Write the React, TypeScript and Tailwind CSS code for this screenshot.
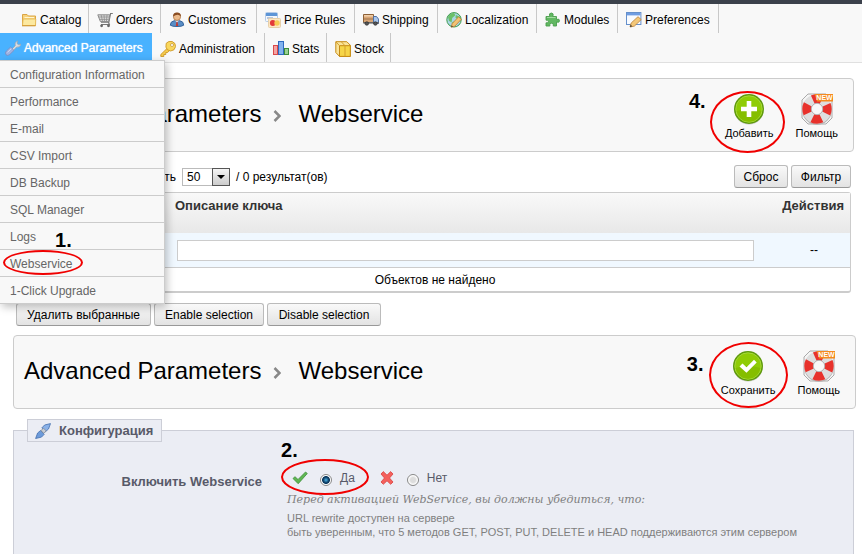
import React, { useState } from "react";

type IconProps = { children: React.ReactNode };

function Icon16({ children }: IconProps) {
  return (
    <svg className="h-4 w-4 shrink-0" viewBox="0 0 16 16" aria-hidden="true">
      {children}
    </svg>
  );
}

const FolderIcon = () => (
  <Icon16>
    <path d="M1.5 13.500V2.500h4.500l1.500 1.500h7v9.500z" fill="#f7d27c" stroke="#dba544" />
    <path d="M1.500 13.500l.7-6.500h12.600l-.3 6.500z" fill="#fce9a0" stroke="#e5b650" strokeWidth=".8" />
    <path d="M3.500 5.500h9.500" stroke="#fff6cf" />
    <path d="M1 13.800h13.500" stroke="#cf9833" />
  </Icon16>
);
const CartIcon = () => (
  <Icon16>
    <path d="M15.800 1.500h-2.200l-1.800 8.600H4M11.500 10.300l.8 2.200H4" fill="none" stroke="#777" strokeWidth="1.200" />
    <path d="M12.800 2.800H.8l2.600 6.800h8.200z" fill="#dcdcdc" stroke="#8a8a8a" />
    <path d="M1.500 5h10.500M2.500 7.400h9M4.200 3l1.300 6.500M7 3l.5 6.500M10 3l-.6 6.500" stroke="#8d8d8d" strokeWidth=".8" />
    <circle cx="4.600" cy="13.800" r="1.400" fill="#666" />
    <circle cx="11.500" cy="13.800" r="1.400" fill="#666" />
  </Icon16>
);
const CustomerIcon = () => (
  <Icon16>
    <path d="M1.3 13.2q0-3.900 4-4.500h5.400q4 .6 4 4.500-1.700 1.300-6.700 1.300t-6.700-1.300z" fill="#5a8ec6" stroke="#34639b" />
    <path d="M6 8.5l2 2 2-2z" fill="#fff" />
    <path d="M7.4 9.8h1.2l.6 4.200H6.800z" fill="#c03a32" />
    <circle cx="8" cy="4.800" r="3.600" fill="#eab98a" stroke="#a86b3a" strokeWidth=".7" />
    <path d="M4 4.600Q4 .5 8 .5t4 4.100q-1.400-1.800-3.400-1.800T4 4.600z" fill="#8a4d22" />
  </Icon16>
);
const PriceIcon = () => (
  <Icon16>
    <rect x=".5" y=".5" width="12" height="9" rx="1" fill="#f3f7fc" stroke="#b5cbe8" />
    <path d="M1 1h11.200v3H1z" fill="#5d95d6" />
    <path d="M2 6h6" stroke="#7c92b8" />
    <rect x="3.500" y="6.500" width="12" height="9" rx="1" fill="#fde7c2" stroke="#e6cfa8" />
    <circle cx="7.800" cy="11" r="2.900" fill="#e33a3a" />
    <circle cx="12" cy="11" r="2.700" fill="#f8cc55" />
  </Icon16>
);
const TruckIcon = () => (
  <Icon16>
    <path d="M.500 2.500h10v8H.500z" fill="#d9a676" stroke="#8d6137" />
    <path d="M1 3h9v1.600H1z" fill="#f0cfaa" />
    <path d="M1 7h9" stroke="#9f7750" />
    <path d="M10.500 4.500h3l2 2.600v4.400h-5z" fill="#a9c6ec" stroke="#4d70a5" />
    <path d="M.3 10h15.400v1.600H.3z" fill="#686868" />
    <circle cx="3.800" cy="11.500" r="1.800" fill="#555" stroke="#222" strokeWidth=".6" />
    <circle cx="12.400" cy="11.500" r="1.800" fill="#555" stroke="#222" strokeWidth=".6" />
  </Icon16>
);
const GlobeIcon = () => (
  <Icon16>
    <circle cx="8" cy="7.800" r="7.200" fill="#a9d6e6" stroke="#3d9a4a" />
    <path d="M2 5q2-4 6-4l1.400 2.300L6.200 6l-.6 4.200L3 9zM10 3l4 2 .6 3.600-3-1-2.200-2z" fill="#6cc068" />
    <path d="M5.500 11l2-1.600L9.600 11 8 14.400z" fill="#6cc068" />
    <path d="M5.200 15.200l1-3.600 6.400-6.800 2.700 2.500-6.500 6.900z" fill="#f2c274" stroke="#bb7e32" strokeWidth=".8" />
    <path d="M5.200 15.200l.5-1.800 1.300 1.200z" fill="#333" />
  </Icon16>
);
const PuzzleIcon = () => (
  <Icon16>
    <path
      d="M1 4.500h3.700Q3.500 1 6.300 1t1.600 3.500h3.600V7.500q3-1.200 3 1.200t-3 1.300v4H8.300q.9-2.800-1.800-2.800T4.900 14H1v-3.200q2.400.6 2.400-1.300T1 8.200z"
      fill="#62b862"
      stroke="#4a9e4c"
      strokeWidth=".9"
    />
    <path d="M2 5.500h8.600" stroke="#a3dba0" />
  </Icon16>
);
const PreferencesIcon = () => (
  <Icon16>
    <rect x=".500" y=".500" width="14.400" height="12" fill="#f8fbff" stroke="#6690cb" />
    <path d="M1 1h13.400v2.400H1z" fill="#6f9de2" />
    <path d="M4 15l1.200-4 6.800-6.300 3.200 2.900-6.800 6.500z" fill="#f3c778" stroke="#ba7d33" strokeWidth=".8" />
    <path d="M4 15l.7-2.200 1.600 1.500z" fill="#333" />
  </Icon16>
);
const ToolsIcon = () => (
  <Icon16>
    <path d="M6.500 9.500l3.800-3.800Q9 2.600 12.600.8L12 3.500l1.400 1.200L16 4q-1.200 4-4.400 3L8 10.800z" fill="#d9dde3" stroke="#9aa2ae" strokeWidth=".7" />
    <path d="M1 14.800Q-.5 13 1.400 11l4.200-4L9 10.400l-4.200 4Q2.600 16.300 1 14.800z" fill="#9fb2e2" stroke="#7489bf" strokeWidth=".7" />
    <path d="M2.500 12.300l3.800-3.600" stroke="#cbd8f5" />
  </Icon16>
);
const KeyIcon = () => (
  <Icon16>
    <path d="M8 6.500L.8 13.500v2h3v-2h2v-2h1.800l2.600-2.600z" fill="#f5cb4b" stroke="#c88f1c" strokeWidth=".8" />
    <path d="M6.200 2.300Q8.400-.3 12.200.5q3.600 1.400 3.400 5.100-.8 4.200-5 4.400-3.700-.4-4.700-3.900z" fill="#f9d75d" stroke="#c88f1c" strokeWidth=".8" />
    <circle cx="12" cy="4" r="1.500" fill="#fff" stroke="#b98219" strokeWidth=".6" />
  </Icon16>
);
const StatsIcon = () => (
  <Icon16>
    <rect x=".500" y="4.500" width="4" height="9" fill="#f5a3a3" stroke="#d94a4a" />
    <rect x="5.500" y=".500" width="5" height="13" fill="#83b2ee" stroke="#2f6ac0" />
    <rect x="11.500" y="7.500" width="4" height="6" fill="#9bd193" stroke="#3c8b38" />
  </Icon16>
);
const BoxIcon = () => (
  <Icon16>
    <path d="M.8.700h11l3.500 3.500v11.200H4.500L.8 11.500z" fill="#fae49a" stroke="#c58a14" />
    <path d="M4.500 4.700h10.800v10.700H4.500z" fill="#f6d548" stroke="#c58a14" />
    <path d="M1 1l3.500 3.700M6.500 1L10 4.700v10.500" fill="none" stroke="#d5a02a" />
  </Icon16>
);
const PlugIcon = () => (
  <Icon16>
    <path d="M.6 15.500l2-5.500 3-2.500 3.600 3.800-2.700 2.800z" fill="#6d9bda" stroke="#426eaf" strokeWidth=".8" />
    <path d="M15.500.6l-2 5.400-3 2.700L6.800 5l2.800-3z" fill="#8bb2e8" stroke="#426eaf" strokeWidth=".8" />
    <path d="M6 7.500l2.500-2.300 2.700 2.700-2.500 2.400z" fill="#c7ccd3" stroke="#7a828f" strokeWidth=".7" />
  </Icon16>
);
const TickIcon = () => (
  <Icon16>
    <path d="M1 8.500L3 6.700 6 9.500 13.500 2l1.800 1.500L6.200 13.700z" fill="#5fb653" stroke="#3c8f38" strokeWidth=".8" />
  </Icon16>
);
const CrossIcon = () => (
  <Icon16>
    <path d="M2 4l2.300-2.400L8 5.200l3.700-3.600L14 4l-3.500 4 3.500 4-2.300 2.300L8 10.800l-3.700 3.500L2 12l3.500-4z" fill="#f4605c" stroke="#d8403e" strokeWidth=".8" />
  </Icon16>
);

function RoundIcon({ kind }: { kind: "plus" | "tick" }) {
  return (
    <svg className="h-8 w-8" viewBox="0 0 32 32" aria-hidden="true">
      <ellipse cx="16" cy="17.500" rx="14.500" ry="14" fill="#c9c9c9" />
      <circle cx="16" cy="16" r="15" fill="#5f9a0c" />
      <circle cx="16" cy="16" r="13.200" fill="#8fcc05" stroke="#a6d83a" />
      <path d="M3.500 18Q16 14 28.500 18 25.500 28.800 16 28.800T3.500 18z" fill="#85be00" />
      {kind === "plus" ? (
        <path d="M13.700 8h4.600v5.700H24v4.600h-5.700V24h-4.600v-5.700H8v-4.600h5.700z" fill="#fff" />
      ) : (
        <path d="M7.500 16.500l3-3 4 3.800 7.500-7.500 2.700 2.800L14.500 22.700z" fill="#fff" />
      )}
    </svg>
  );
}

function HelpIcon() {
  return (
    <svg className="h-8 w-8" viewBox="0 0 32 32" aria-hidden="true">
      <path d="M7 1h18l6 6v18l-6 6H7l-6-6V7z" fill="#f5f5f5" stroke="#aaa" />
      <circle cx="16" cy="17" r="14.800" fill="#b0b0b0" />
      <circle cx="16" cy="16" r="10.200" fill="none" stroke="#dedede" strokeWidth="9" />
      <circle
        cx="16"
        cy="16"
        r="10.200"
        fill="none"
        stroke="#e8322c"
        strokeWidth="9"
        strokeDasharray="9.220 6.800"
        strokeDashoffset="4.610"
      />
      <circle cx="16" cy="16" r="5.700" fill="#f8f8f8" stroke="#aaa" strokeWidth=".8" />
      <path d="M13.500 1H32v7.500H16z" fill="#f58a1f" />
      <text x="23.500" y="7.300" textAnchor="middle" fontSize="7" fontWeight="700" fill="#fff" fontFamily="Liberation Sans, sans-serif">
        NEW
      </text>
    </svg>
  );
}

/* Hand-drawn style red outline laid over a highlighted control */
function Ring({ className }: { className: string }) {
  return <span aria-hidden="true" className={`pointer-events-none absolute rounded-[50%] border-2 border-[#f00000] ${className}`} />;
}

function Step({ n, className }: { n: number; className: string }) {
  return <span className={`pointer-events-none absolute text-xl leading-5 font-bold text-black ${className}`}>{n}.</span>;
}

const firstRow = [
  { label: "Catalog", icon: <FolderIcon />, width: "w-[76px]" },
  { label: "Orders", icon: <CartIcon />, width: "w-[72px]" },
  { label: "Customers", icon: <CustomerIcon />, width: "w-[96px]" },
  { label: "Price Rules", icon: <PriceIcon />, width: "w-[98px]" },
  { label: "Shipping", icon: <TruckIcon />, width: "w-[83px]" },
  { label: "Localization", icon: <GlobeIcon />, width: "w-[99px]" },
  { label: "Modules", icon: <PuzzleIcon />, width: "w-[81px]" },
  { label: "Preferences", icon: <PreferencesIcon />, width: "w-[101px]" },
];
const secondRow = [
  { label: "Administration", icon: <KeyIcon />, width: "w-[113px]" },
  { label: "Stats", icon: <StatsIcon />, width: "w-[62px]" },
  { label: "Stock", icon: <BoxIcon />, width: "w-[64px]" },
];
const submenu = [
  "Configuration Information",
  "Performance",
  "E-mail",
  "CSV Import",
  "DB Backup",
  "SQL Manager",
  "Logs",
  "Webservice",
  "1-Click Upgrade",
];

function NavItem({ label, icon, width }: { label: string; icon: React.ReactNode; width: string }) {
  return (
    <li className={`${width} border-r border-[#c8c8c8]`}>
      <a href="#" className="flex h-[29px] items-center gap-[3px] pt-0.5 pl-2 whitespace-nowrap text-black">
        {icon}
        {label}
      </a>
    </li>
  );
}

function Submenu() {
  return (
    <ul className="absolute top-[27px] left-0 z-20 w-[165px] border-t border-r border-[#ccc] bg-[#f8f8f8] shadow-[2px_3px_8px_rgba(0,0,0,0.25)]">
      {submenu.map((label) => (
        <li key={label} className="relative">
          <a href="#" className="flex h-[27px] items-center border-b border-[#ccc] pt-0.5 pl-2.5 text-[#666]">
            {label}
          </a>
          {label === "Webservice" && (
            <>
              <Ring className="top-0 left-[3px] h-[25px] w-20" />
              <Step n={1} className="-top-5 left-[55px]" />
            </>
          )}
        </li>
      ))}
    </ul>
  );
}

type HeadingProps = { kind: "plus" | "tick"; label: string; step: number; ring: string; stepPlace: string };

function Heading({ kind, label, step, ring, stepPlace }: HeadingProps) {
  return (
    <header className="flex h-[74px] items-center justify-between rounded border border-[#ccc] bg-[#f8f8f8] pr-[15px] pl-2.5">
      <h1 className="flex items-center pb-0.5 text-2xl leading-8 text-black">
        Advanced Parameters
        <svg className="mt-1 mr-[17px] ml-3 h-3 w-2" viewBox="0 0 8 12" aria-hidden="true">
          <path d="M1.500 1l5 5-5 5" fill="none" stroke="#888" strokeWidth="2.500" />
        </svg>
        Webservice
      </h1>
      <div className="flex gap-[22px] pt-1 text-[11px] leading-4 text-black">
        <button type="button" className="relative flex flex-col items-center">
          <RoundIcon kind={kind} />
          <span>{label}</span>
          <Ring className={ring} />
          <Step n={step} className={stepPlace} />
        </button>
        <button type="button" className="flex flex-col items-center">
          <HelpIcon />
          <span>Помощь</span>
        </button>
      </div>
    </header>
  );
}

function Button({ children, width }: { children: React.ReactNode; width: string }) {
  return (
    <button
      type="button"
      className={`${width} h-[23px] rounded-[3px] border border-[#bbb] border-b-[#999] bg-linear-to-b from-[#f9f9f9] to-[#e3e3e3] whitespace-nowrap text-black`}
    >
      {children}
    </button>
  );
}

const radioClass =
  "h-3 w-3 appearance-none rounded-full border border-[#888] bg-[radial-gradient(circle,#ddd_0%,#ddd_35%,#fff_65%)] checked:bg-[radial-gradient(circle,#4bb4e8_0%,#0d3c63_40%,#0d3c63_50%,#fff_62%)]";

export default function App() {
  const [enabled, setEnabled] = useState(true);
  return (
    <div className="flex min-h-screen flex-col overflow-x-hidden bg-white font-['Liberation_Sans',Arial,sans-serif] text-xs text-black">
      <div className="h-1 bg-[#3b414b]" />
      <nav className="border-b border-[#e0e0e0] bg-[#f8f8f8]">
        <ul className="flex pl-[13px]">
          {firstRow.map((item) => (
            <NavItem key={item.label} {...item} />
          ))}
        </ul>
        <ul className="flex">
          <li className="relative w-[152px]">
            <a
              href="#"
              className="flex h-[27px] items-center gap-[3px] bg-[#49b2ff] pt-0.5 pl-[5px] whitespace-nowrap text-white [text-shadow:0_0_1px_#fff]"
            >
              <ToolsIcon />
              Advanced Parameters
            </a>
            <Submenu />
          </li>
          {secondRow.map((item) => (
            <NavItem key={item.label} {...item} />
          ))}
        </ul>
      </nav>

      <main className="flex flex-1 flex-col pt-[15px] pl-[13px]">
        <div className="mr-2">
          <Heading
            kind="plus"
            label="Добавить"
            step={4}
            ring="-left-[15px] -top-0.5 h-[62px] w-[75px]"
            stepPlace="-top-0.5 -left-9"
          />
        </div>

        <section className="mt-[13px] mr-[11px]">
          <div className="flex h-[23px] items-center justify-between">
            <div className="flex items-center gap-1.5 pl-28">
              <label htmlFor="page-size">Показать</label>
              <span className="relative">
                <select
                  id="page-size"
                  className="block h-[18px] w-12 appearance-none border border-[#bbb] bg-white pl-1 text-xs"
                  defaultValue="50"
                >
                  <option>20</option>
                  <option>50</option>
                  <option>100</option>
                </select>
                <span className="pointer-events-none absolute top-0 right-0 flex h-[18px] w-[18px] items-center justify-center border border-[#555] bg-linear-to-b from-[#f5f5f5] to-[#ccc]">
                  <svg className="h-1 w-2" viewBox="0 0 8 4" aria-hidden="true">
                    <path d="M0 0h8L4 4z" fill="#000" />
                  </svg>
                </span>
              </span>
              <span>/ 0 результат(ов)</span>
            </div>
            <div className="flex gap-[3px]">
              <Button width="w-[54px]">Сброс</Button>
              <Button width="w-[60px]">Фильтр</Button>
            </div>
          </div>

          <table className="mt-1 w-full border-separate border-spacing-0 rounded-[3px] border border-b-2 border-[#ccc]">
            <thead>
              <tr className="h-10 bg-linear-to-b from-[#f9f9f9] to-[#e8e8e8] text-[13px] leading-4 text-[#333]">
                <th className="w-[157px]" aria-label="Ключ" />
                <th className="pt-[5px] pl-1 text-left align-top">Описание ключа</th>
                <th className="w-[82px] pt-[5px] pr-1.5 text-right align-top">Действия</th>
              </tr>
            </thead>
            <tbody>
              <tr className="h-[35px] bg-[#f0f8ff]">
                <td className="border-b border-[#ccc]" />
                <td className="border-b border-[#ccc] pr-3.5 pl-1.5">
                  <input type="text" aria-label="Описание ключа" className="block h-[21px] w-full border border-[#ccc] bg-white px-1" />
                </td>
                <td className="border-b border-[#ccc] pl-2.5 text-center">--</td>
              </tr>
              <tr className="h-[23px]">
                <td colSpan={3} className="pl-1.5 text-center">
                  Объектов не найдено
                </td>
              </tr>
            </tbody>
          </table>

          <div className="mt-2.5 flex gap-[3px] pl-[3px]">
            <Button width="w-[135px]">Удалить выбранные</Button>
            <Button width="w-[110px]">Enable selection</Button>
            <Button width="w-[114px]">Disable selection</Button>
          </div>
        </section>

        <div className="mt-[9px] mr-1.5">
          <Heading
            kind="tick"
            label="Сохранить"
            step={3}
            ring="-left-3 -top-2 h-[66px] w-[79px]"
            stepPlace="top-1 -left-[34px]"
          />
        </div>

        <form className="mt-2.5 mr-2 flex flex-1 flex-col">
          <fieldset className="flex-1 border border-b-0 border-[#ccced7] bg-[#ebedf4] text-[#585a69]">
            <legend className="ml-[13px] flex h-[23px] w-[135px] items-center gap-2 border border-[#ccced7] bg-[#ebedf4] pl-[7px] text-[13px] font-bold">
              <PlugIcon />
              Конфигурация
            </legend>
            <div className="grid grid-cols-[248px_1fr] gap-x-[25px] pt-[26px]">
              <span id="enable-label" className="pt-1.5 text-right text-[13px] leading-4 font-bold">
                Включить Webservice
              </span>
              <div>
                <div role="radiogroup" aria-labelledby="enable-label" className="relative flex h-5 items-center pl-[5px]">
                  <TickIcon />
                  <input
                    id="ws-on"
                    type="radio"
                    name="ws"
                    checked={enabled}
                    onChange={() => setEnabled(true)}
                    className={`mt-1 mr-2 ml-3 ${radioClass}`}
                  />
                  <label htmlFor="ws-on" className="mr-6">
                    Да
                  </label>
                  <CrossIcon />
                  <input
                    id="ws-off"
                    type="radio"
                    name="ws"
                    checked={!enabled}
                    onChange={() => setEnabled(false)}
                    className={`mt-1 mr-2 ml-3 ${radioClass}`}
                  />
                  <label htmlFor="ws-off">Нет</label>
                  <Ring className="-top-[9px] -left-1.5 h-9 w-[88px]" />
                  <Step n={2} className="-top-7 -left-1.5" />
                </div>
                <p className="pt-1 font-['DejaVu_Serif',Georgia,serif] text-[11px] leading-4 whitespace-nowrap text-[#7f7f7f] italic">
                  Перед активацией WebService, вы должны убедиться, что:
                </p>
                <p className="pt-[3px] text-[11px] leading-3.5 whitespace-nowrap text-[#7f7f7f]">
                  URL rewrite доступен на сервере
                  <br />
                  быть уверенным, что 5 методов GET, POST, PUT, DELETE и HEAD поддерживаются этим сервером
                </p>
              </div>
            </div>
          </fieldset>
        </form>
      </main>
    </div>
  );
}
